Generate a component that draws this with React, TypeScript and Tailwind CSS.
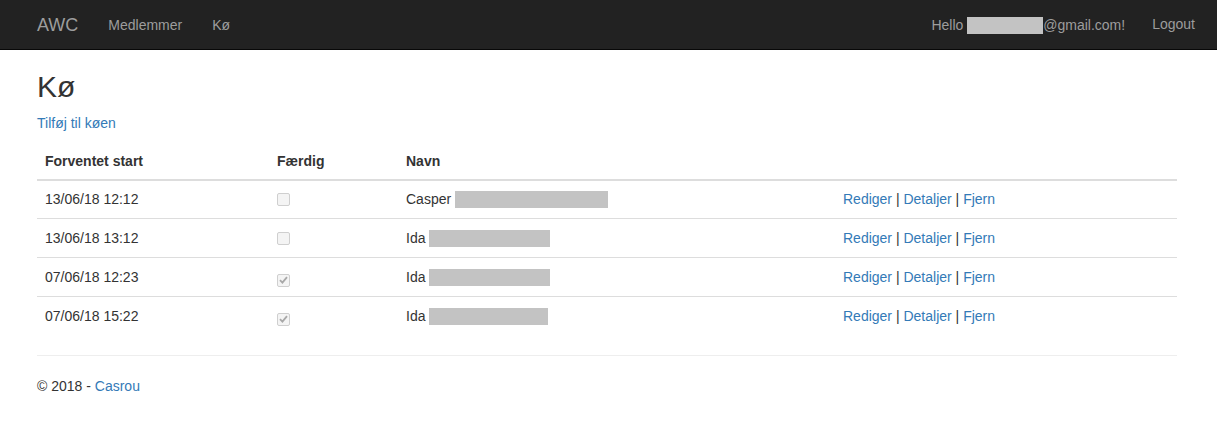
const rows = [
  { start: "13/06/18 12:12", done: false, name: "Casper", box: 153 },
  { start: "13/06/18 13:12", done: false, name: "Ida", box: 121 },
  { start: "07/06/18 12:23", done: true, name: "Ida", box: 121 },
  { start: "07/06/18 15:22", done: true, name: "Ida", box: 119 },
];

const Redacted = ({ width }: { width: number }) => (
  <span
    className="inline-block h-[17px] bg-[#c3c3c3] align-[-4px]"
    style={{ width }}
  />
);

const Check = ({ checked }: { checked: boolean }) => (
  <span className="inline-flex h-[13px] w-[13px] items-center justify-center rounded-[2px] border border-[#cfcfcf] bg-[#f4f4f4] align-[-2px]">
    {checked && (
      <svg width="9" height="8" viewBox="0 0 9 8">
        <path
          d="M1 4.2 L3.4 6.6 L8 1.2"
          fill="none"
          stroke="#a8a8a8"
          strokeWidth="1.8"
        />
      </svg>
    )}
  </span>
);

const App = () => {
  return (
    <div className="min-h-screen bg-white font-['Liberation_Sans',Arial,sans-serif] text-[14px] leading-[20px] text-[#333]">
      <nav className="h-[50px] border-b border-[#080808] bg-[#222]">
        <div className="ml-[22px] flex w-[1170px] px-[15px]">
          <a className="ml-[-15px] h-[50px] px-[15px] py-[15px] text-[18px] leading-[20px] text-[#9d9d9d]">
            AWC
          </a>
          <ul className="flex">
            <li>
              <a className="block px-[15px] py-[15px] text-[#9d9d9d]">
                Medlemmer
              </a>
            </li>
            <li>
              <a className="block px-[15px] py-[15px] text-[#9d9d9d]">Kø</a>
            </li>
          </ul>
          <ul className="ml-auto mr-[-30px] flex">
            <li>
              <a className="block px-[15px] py-[15px] text-[#9d9d9d]">
                Hello <Redacted width={76} />@gmail.com!
              </a>
            </li>
            <li>
              <button className="mt-[8px] px-[12px] py-[6px] text-[#9d9d9d]">
                Logout
              </button>
            </li>
          </ul>
        </div>
      </nav>

      <div className="ml-[22px] w-[1170px] px-[15px]">
        <h2 className="mb-[10px] mt-[20px] text-[30px] font-medium leading-[33px]">
          Kø
        </h2>
        <p className="mb-[10px]">
          <a className="text-[#337ab7]">Tilføj til køen</a>
        </p>

        <table className="mb-[20px] w-full border-collapse">
          <thead>
            <tr>
              <th className="w-[232px] border-b-2 border-[#ddd] p-[8px] text-left font-bold">
                Forventet start
              </th>
              <th className="w-[129px] border-b-2 border-[#ddd] p-[8px] text-left font-bold">
                Færdig
              </th>
              <th className="w-[437px] border-b-2 border-[#ddd] p-[8px] text-left font-bold">
                Navn
              </th>
              <th className="border-b-2 border-[#ddd] p-[8px]"></th>
            </tr>
          </thead>
          <tbody>
            {rows.map((r, i) => {
              const cell =
                i > 0
                  ? "border-t border-[#ddd] p-[8px] leading-[22px]"
                  : "p-[8px] leading-[21px]";
              return (
                <tr key={i}>
                  <td className={cell}>{r.start}</td>
                  <td className={cell}>
                    <Check checked={r.done} />
                  </td>
                  <td className={cell}>
                    {r.name} <Redacted width={r.box} />
                  </td>
                  <td className={cell}>
                    <a className="text-[#337ab7]">Rediger</a> |{" "}
                    <a className="text-[#337ab7]">Detaljer</a> |{" "}
                    <a className="text-[#337ab7]">Fjern</a>
                  </td>
                </tr>
              );
            })}
          </tbody>
        </table>

        <hr className="my-[20px] border-t border-[#eee]" />
        <footer>
          <p className="mb-[10px]">
            © 2018 - <a className="text-[#337ab7]">Casrou</a>
          </p>
        </footer>
      </div>
    </div>
  );
};

export default App;
